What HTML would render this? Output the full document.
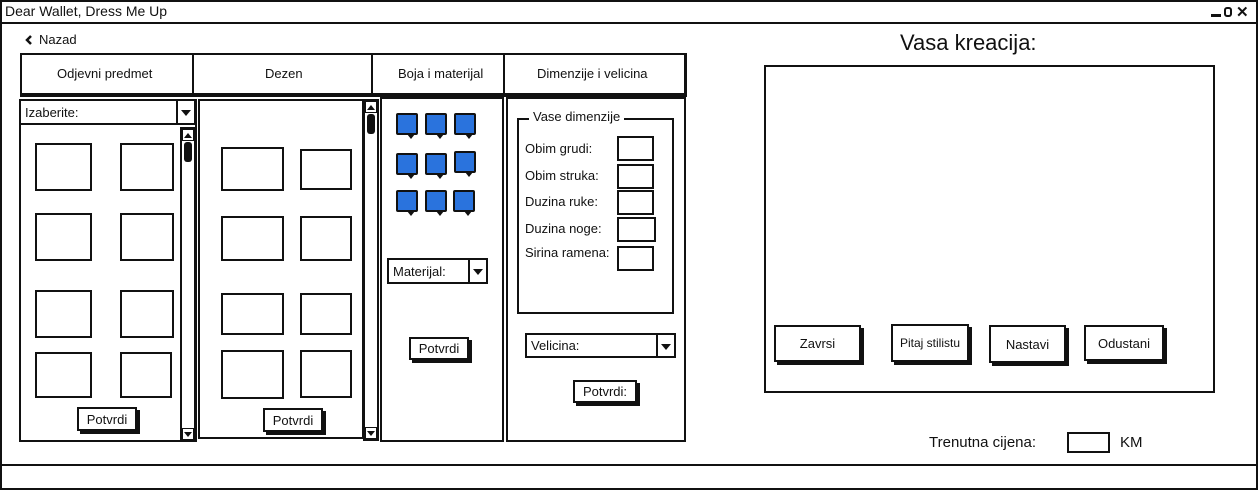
<!DOCTYPE html>
<html><head><meta charset="utf-8"><style>
*{box-sizing:border-box;margin:0;padding:0}
body{width:1258px;height:490px;background:#fff;position:relative;overflow:hidden;font-family:"Liberation Sans",sans-serif;font-size:13px;color:#111}
.a{position:absolute}
.b{position:absolute;border:2px solid #111;background:#fff}
.t{position:absolute;white-space:nowrap}
.btn{position:absolute;border:2px solid #111;background:#fff;box-shadow:3px 3px 0 #111;display:flex;align-items:center;justify-content:center;font-size:13px}
.sw{position:absolute;width:22px;height:22px;background:#2a73dd;border:2px solid #111;border-radius:2px}
.sw:after{content:"";position:absolute;right:1px;bottom:-6px;border-left:4px solid transparent;border-right:4px solid transparent;border-top:5px solid #111}
.dd{position:absolute;border:2px solid #111;background:#fff;font-size:13px;padding-left:4px;display:flex;align-items:center}
.arr{position:absolute;right:0;top:0;bottom:0;width:18px;border-left:2px solid #111}
.arr:after{content:"";position:absolute;left:3px;top:9px;border-left:5px solid transparent;border-right:5px solid transparent;border-top:6px solid #111}
.sb{position:absolute;border:2px solid #111;background:#fff;width:16px}
.thumb{position:absolute;left:2px;width:8px;height:20px;background:#111;border-radius:3px}
.up,.dn{position:absolute;left:0;width:12px;height:12px;border:1px solid #111;background:#fff}
.up:after{content:"";position:absolute;left:1px;top:3px;border-left:4px solid transparent;border-right:4px solid transparent;border-bottom:5px solid #111}
.dn:after{content:"";position:absolute;left:1px;top:3px;border-left:4px solid transparent;border-right:4px solid transparent;border-top:5px solid #111}
</style></head><body>
<div class="b" style="left:0;top:0;width:1258px;height:490px"></div>
<div class="a" style="left:0;top:22px;width:1258px;height:2px;background:#111"></div>
<div class="t" style="left:5px;top:3px;font-size:14px">Dear Wallet, Dress Me Up</div>
<div class="a" style="left:1211px;top:14px;width:10px;height:3px;background:#111"></div>
<div class="a" style="left:1224px;top:7px;width:8px;height:10px;border:2px solid #111;border-radius:3px"></div>
<div class="t" style="left:1236px;top:3px;font-size:15px;font-weight:bold">✕</div>
<div class="a" style="left:0;top:464px;width:1258px;height:2px;background:#111"></div>

<svg class="a" style="left:24px;top:34px" width="10" height="12"><path d="M7 2 L3 6 L7 10" stroke="#111" stroke-width="2.5" fill="none"/></svg>
<div class="t" style="left:39px;top:32px;font-size:13px">Nazad</div>

<!-- tabs -->
<div class="b" style="left:20px;top:53px;width:666px;height:44px;border-bottom-width:4px"></div>
<div class="a" style="left:192px;top:53px;width:2px;height:42px;background:#111"></div>
<div class="a" style="left:371px;top:53px;width:2px;height:42px;background:#111"></div>
<div class="a" style="left:503px;top:53px;width:2px;height:42px;background:#111"></div>
<div class="a" style="left:684px;top:53px;width:3px;height:44px;background:#111"></div>
<div class="t" style="left:57px;top:66px">Odjevni predmet</div>
<div class="t" style="left:265px;top:66px">Dezen</div>
<div class="t" style="left:398px;top:66px">Boja i materijal</div>
<div class="t" style="left:537px;top:66px">Dimenzije i velicina</div>

<!-- panel 1 -->
<div class="b" style="left:19px;top:99px;width:178px;height:343px"></div>
<div class="dd" style="left:19px;top:99px;width:177px;height:26px">Izaberite:<div class="arr"></div></div>
<div class="sb" style="left:180px;top:127px;height:315px"><div class="up" style="top:0"></div><div class="thumb" style="top:13px"></div><div class="dn" style="bottom:0"></div></div>
<div class="b" style="left:35px;top:143px;width:57px;height:48px"></div>
<div class="b" style="left:120px;top:143px;width:54px;height:48px"></div>
<div class="b" style="left:35px;top:213px;width:57px;height:48px"></div>
<div class="b" style="left:120px;top:213px;width:54px;height:48px"></div>
<div class="b" style="left:35px;top:290px;width:57px;height:48px"></div>
<div class="b" style="left:120px;top:290px;width:54px;height:48px"></div>
<div class="b" style="left:35px;top:352px;width:57px;height:46px"></div>
<div class="b" style="left:120px;top:352px;width:52px;height:46px"></div>
<div class="btn" style="left:77px;top:407px;width:60px;height:24px">Potvrdi</div>

<!-- panel 2 -->
<div class="b" style="left:198px;top:99px;width:166px;height:340px"></div>
<div class="sb" style="left:363px;top:99px;height:342px"><div class="up" style="top:0"></div><div class="thumb" style="top:13px"></div><div class="dn" style="bottom:0"></div></div>
<div class="b" style="left:221px;top:147px;width:63px;height:44px"></div>
<div class="b" style="left:300px;top:149px;width:52px;height:41px"></div>
<div class="b" style="left:221px;top:216px;width:63px;height:45px"></div>
<div class="b" style="left:300px;top:216px;width:52px;height:45px"></div>
<div class="b" style="left:221px;top:293px;width:63px;height:42px"></div>
<div class="b" style="left:300px;top:293px;width:52px;height:42px"></div>
<div class="b" style="left:221px;top:350px;width:63px;height:49px"></div>
<div class="b" style="left:300px;top:350px;width:52px;height:48px"></div>
<div class="btn" style="left:263px;top:408px;width:60px;height:24px">Potvrdi</div>

<!-- panel 3 -->
<div class="b" style="left:380px;top:97px;width:124px;height:345px"></div>
<div class="sw" style="left:396px;top:113px"></div>
<div class="sw" style="left:425px;top:113px"></div>
<div class="sw" style="left:454px;top:113px"></div>
<div class="sw" style="left:396px;top:153px"></div>
<div class="sw" style="left:425px;top:153px"></div>
<div class="sw" style="left:454px;top:151px"></div>
<div class="sw" style="left:396px;top:190px"></div>
<div class="sw" style="left:425px;top:190px"></div>
<div class="sw" style="left:453px;top:190px"></div>
<div class="dd" style="left:387px;top:258px;width:101px;height:26px">Materijal:<div class="arr"></div></div>
<div class="btn" style="left:409px;top:337px;width:60px;height:23px">Potvrdi</div>

<!-- panel 4 -->
<div class="b" style="left:506px;top:97px;width:180px;height:345px"></div>
<div class="b" style="left:517px;top:118px;width:157px;height:196px"></div>
<div class="t" style="left:529px;top:109px;background:#fff;padding:0 4px">Vase dimenzije</div>
<div class="t" style="left:525px;top:141px">Obim grudi:</div>
<div class="t" style="left:525px;top:168px">Obim struka:</div>
<div class="t" style="left:525px;top:194px">Duzina ruke:</div>
<div class="t" style="left:525px;top:221px">Duzina noge:</div>
<div class="t" style="left:525px;top:245px">Sirina ramena:</div>
<div class="b" style="left:617px;top:136px;width:37px;height:25px"></div>
<div class="b" style="left:617px;top:164px;width:37px;height:25px"></div>
<div class="b" style="left:617px;top:190px;width:37px;height:25px"></div>
<div class="b" style="left:617px;top:217px;width:39px;height:25px"></div>
<div class="b" style="left:617px;top:246px;width:37px;height:25px"></div>
<div class="dd" style="left:525px;top:333px;width:151px;height:25px">Velicina:<div class="arr"></div></div>
<div class="btn" style="left:573px;top:380px;width:64px;height:23px">Potvrdi:</div>

<!-- right -->
<div class="t" style="left:900px;top:30px;font-size:22px">Vasa kreacija:</div>
<div class="b" style="left:764px;top:65px;width:451px;height:328px"></div>
<div class="btn" style="left:774px;top:325px;width:87px;height:37px">Zavrsi</div>
<div class="btn" style="left:891px;top:324px;width:78px;height:38px;font-size:12px">Pitaj stilistu</div>
<div class="btn" style="left:989px;top:325px;width:77px;height:38px">Nastavi</div>
<div class="btn" style="left:1084px;top:325px;width:80px;height:36px">Odustani</div>
<div class="t" style="left:929px;top:434px;font-size:15px">Trenutna cijena:</div>
<div class="b" style="left:1067px;top:432px;width:43px;height:21px"></div>
<div class="t" style="left:1120px;top:434px;font-size:15px">KM</div>
</body></html>
